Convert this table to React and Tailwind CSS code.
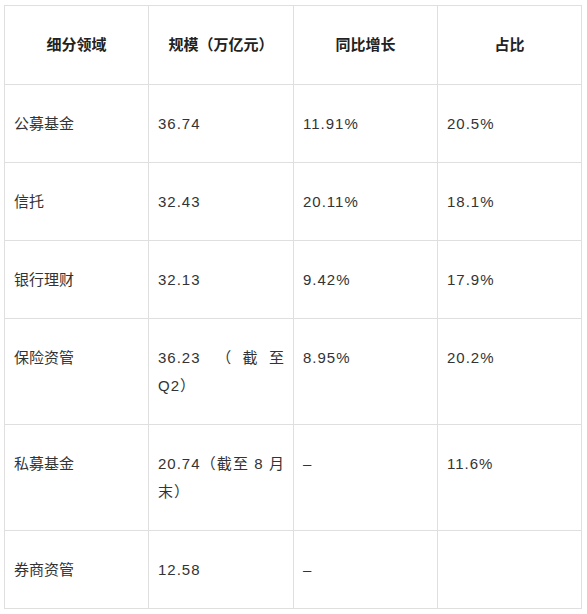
import React from 'react';

// Asset management scale table
const rows = [
    ["公募基金", "36.74", "11.91%", "20.5%"],
    ["信托", "32.43", "20.11%", "18.1%"],
    ["银行理财", "32.13", "9.42%", "17.9%"],
    ["保险资管", "36.23 （截至 Q2）", "8.95%", "20.2%"],
    ["私募基金", "20.74（截至 8 月末）", "–", "11.6%"],
    ["券商资管", "12.58", "–", ""],
];

const headers = ["细分领域", "规模（万亿元）", "同比增长", "占比"];

export default function App() {
    return (
        <div className="bg-white min-h-screen pl-[4px] pt-[5px]" style={{ fontFamily: '"Liberation Sans", "Noto Sans CJK SC", sans-serif' }}>
            <table className="border-collapse table-fixed w-[577px] text-[15px] leading-[28px] text-[#333]">
                <colgroup>
                    <col className="w-[144px]" />
                    <col className="w-[145px]" />
                    <col className="w-[144px]" />
                    <col className="w-[144px]" />
                </colgroup>
                <thead>
                    <tr className="h-[79px]">
                        {headers.map((h) => (
                            <th key={h} className="border border-[#dfdfdf] px-[9px] text-center font-bold text-[#222]">
                                {h}
                            </th>
                        ))}
                    </tr>
                </thead>
                <tbody>
                    {rows.map((r, i) => (
                        <tr key={i}>
                            {r.map((c, j) => (
                                <td
                                    key={j}
                                    className={
                                        j === 0
                                            ? "border border-[#dfdfdf] pl-[9px] pr-[9px] pt-[25px] pb-[24px] align-top text-justify"
                                            : "border border-[#dfdfdf] pl-[9px] pr-[8px] pt-[25px] pb-[24px] align-top text-justify tracking-[1px]"
                                    }
                                >
                                    {c}
                                </td>
                            ))}
                        </tr>
                    ))}
                </tbody>
            </table>
        </div>
    );
}
